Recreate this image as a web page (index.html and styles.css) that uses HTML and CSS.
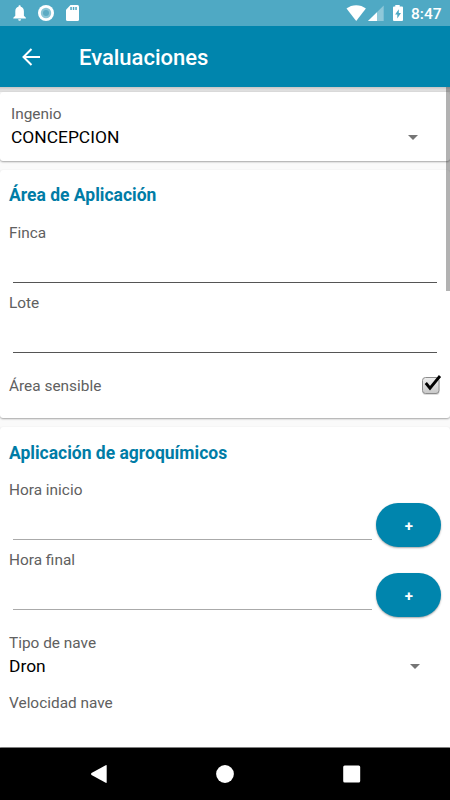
FILE: index.html
```html
<!DOCTYPE html>
<html lang="es">
<head>
  <meta charset="UTF-8" />
  <meta name="viewport" content="width=device-width, initial-scale=1.0"/>
  <title>Evaluaciones</title>
  <link rel="stylesheet" href="styles.css">
</head>
<body>
  <div class="status-bar">
    <svg class="status-icons" width="90" height="26" viewBox="0 0 90 26" fill="#fff">
      <path d="M19.600 5.200c.7 0 1.100.5 1.100 1.200v.4c2 .5 3.200 2.200 3.200 4.400v4.500l2 2v.9H13.300v-.9l2-2v-4.500c0-2.200 1.200-3.900 3.200-4.400v-.4c0-.7.400-1.200 1.100-1.200z"/>
      <path d="M18.200 19.300h2.800a1.400 1.500 0 0 1-2.800 0z"/>
      <circle cx="46" cy="13" r="8"/>
      <circle cx="46" cy="13" r="5.200" fill="#8ac5d6"/>
      <circle cx="46" cy="13" r="3" fill="#5cabc3"/>
      <path d="M70.500 5H77.500a1.500 1.500 0 0 1 1.500 1.500v13a1.500 1.500 0 0 1-1.500 1.500H67.500a1.500 1.500 0 0 1-1.500-1.500V9.700z"/>
      <path d="M70.300 7h1.500v3h-1.500zM72.800 7h1.500v3h-1.500zM75.300 7h1.500v3h-1.500z" fill="#4fa9c4"/>
    </svg>
    <svg class="status-icons" width="60" height="26" viewBox="0 0 60 26" fill="#fff">
      <path d="M1.500 8.600C6.800 4 15.600 4 20.900 8.600L11.200 21z"/>
      <path d="M38.700 5.500V21H23z" fill="#8fc8d9"/>
      <path d="M32 12.200V21H23z"/>
      <path d="M50.300 5h4.400v1.600H57q1 0 1 1V20q0 1-1 1h-8q-1 0-1-1V7.600q0-1 1-1h1.300z"/>
      <path d="M53.800 9.300l-3.700 5.200h2.200v4l3.700-5.500h-2.200z" fill="#4fa9c4"/>
    </svg>
    <span class="clock">8:47</span>
  </div>

  <header class="app-bar">
    <svg class="back" width="20" height="20" viewBox="0 0 20 20" fill="none" stroke="#fff" stroke-width="2">
      <path d="M19 10H3M10.500 2L2.500 10l8 8"/>
    </svg>
    <h1>Evaluaciones</h1>
  </header>

  <main class="content">
    <section class="card card-select">
      <label>Ingenio</label>
      <div class="select"><span>CONCEPCION</span><i class="arrow"></i></div>
    </section>

    <section class="card card-area">
      <h2>Área de Aplicación</h2>
      <div class="field">
        <label>Finca</label>
        <div class="line"></div>
      </div>
      <div class="field">
        <label>Lote</label>
        <div class="line"></div>
      </div>
      <div class="check-row">
        <label>Área sensible</label>
        <svg width="21" height="24" viewBox="0 0 21 24">
          <defs>
            <linearGradient id="box" x1="0" y1="0" x2="0" y2="1">
              <stop offset="0" stop-color="#eee"/>
              <stop offset="1" stop-color="#c8c8c8"/>
            </linearGradient>
          </defs>
          <rect x="1.500" y="4.500" width="17" height="16.500" rx="3" fill="#ddd"/>
          <rect x="1.500" y="3.500" width="16.500" height="16" rx="3" fill="url(#box)" stroke="#8c8c8c"/>
          <path d="M4.800 9l4.200 5.200L19 2" fill="none" stroke="#000" stroke-width="2.800"/>
        </svg>
      </div>
    </section>

    <section class="card card-last">
      <h2>Aplicación de agroquímicos</h2>
      <div class="field time">
        <label>Hora inicio</label>
        <div class="time-row"><div class="line"></div><button>+</button></div>
      </div>
      <div class="field time">
        <label>Hora final</label>
        <div class="time-row"><div class="line"></div><button>+</button></div>
      </div>
      <div class="nave">
        <label>Tipo de nave</label>
        <div class="select"><span>Dron</span><i class="arrow"></i></div>
      </div>
      <label>Velocidad nave</label>
    </section>
    <div class="scrollbar"></div>
  </main>

  <nav class="nav-bar">
    <svg width="18" height="20" viewBox="0 0 18 20" fill="#fff"><path d="M16.700 1.200q1-.5 1 .6v16.400q0 1.100-1 .6L2.500 10.900q-1.100-.9 0-1.800z"/></svg>
    <svg width="18" height="20" viewBox="0 0 18 20" fill="#fff"><circle cx="9" cy="10" r="8.900"/></svg>
    <svg width="18" height="20" viewBox="0 0 18 20" fill="#fff"><rect x=".2" y="1.500" width="17" height="17" rx="1.500"/></svg>
  </nav>
</body>
</html>
```
FILE: styles.css
```css
* {
  box-sizing: border-box;
  font-family: Roboto, sans-serif;
}

body {
  margin: 0;
  height: 800px;
  display: flex;
  flex-direction: column;
  background: #fafafa;
  overflow: hidden;
}

.status-bar {
  height: 26px;
  flex: none;
  display: flex;
  align-items: center;
  background: #4fa9c4;
}

.status-icons:nth-child(2) {
  margin-left: auto;
}

.clock {
  width: 45px;
  padding-left: 6px;
  color: #fff;
  font-size: 15.5px;
  font-weight: 500;
  line-height: 26px;
  margin-top: 2px;
}

.app-bar {
  height: 61px;
  flex: none;
  display: flex;
  align-items: center;
  padding-left: 21px;
  background: #0085ad;
}

h1 {
  margin: 2px 0 0 38px;
  color: #fff;
  font-size: 22px;
  font-weight: 500;
}

.content {
  position: relative;
  flex: 1;
  min-height: 0;
  padding-top: 5px;
  background: linear-gradient(#c4c4c4, #e0e0e0 3px, #dcdcdc 5px, #fafafa 5px);
}

.card {
  padding: 14px 9px 0;
  border-radius: 3px;
  background: #fff;
  box-shadow: 0 1px 2px rgba(0, 0, 0, 0.35);
}

.card-select {
  height: 69px;
  margin-bottom: 9px;
  padding: 12px 11px 0;
}

.card-area {
  height: 248px;
  margin-bottom: 9px;
}

.card-last {
  height: 320px;
  border-radius: 3px 3px 0 0;
}

h2 {
  margin: 0 0 15px;
  color: #007ca6;
  font-size: 17.5px;
  font-weight: 700;
  line-height: 24px;
}

.card-area h2 {
  line-height: 23px;
  margin-bottom: 16px;
}

label {
  display: block;
  color: #606060;
  font-size: 15.4px;
  line-height: 20px;
}

.field {
  height: 70px;
}

.line {
  height: 40px;
  margin: 0 4px;
  border-bottom: 1px solid #555;
}

.time-row {
  display: flex;
}

.time-row .line {
  flex: 1;
  border-color: #aaa;
}

button {
  width: 65.5px;
  height: 44px;
  margin-top: 3px;
  padding: 2px 0 0 1px;
  border: none;
  border-radius: 22px;
  background: #0085ad;
  box-shadow: 0 1px 2px rgba(0, 0, 0, 0.35);
  color: #fff;
  font-size: 15px;
  font-weight: 700;
}

.select {
  display: flex;
  align-items: center;
  justify-content: space-between;
  height: 24px;
  margin-top: 1px;
  padding-right: 21px;
  color: #000;
  font-size: 17.4px;
}

.arrow {
  border: 5px solid transparent;
  border-top-color: #757575;
  border-bottom: none;
}

.check-row {
  display: flex;
  align-items: center;
  justify-content: space-between;
  height: 46px;
}

.check-row svg {
  margin-right: -1px;
}

.nave {
  padding: 13px 0 15px;
}

.scrollbar {
  position: absolute;
  top: 0;
  right: 0;
  width: 4px;
  height: 204px;
  background: rgba(0, 0, 0, 0.3);
}

.nav-bar {
  height: 53px;
  flex: none;
  display: flex;
  align-items: center;
  justify-content: center;
  gap: 109px;
  border-top: 1px solid #aaa;
  background: #000;
}
```
